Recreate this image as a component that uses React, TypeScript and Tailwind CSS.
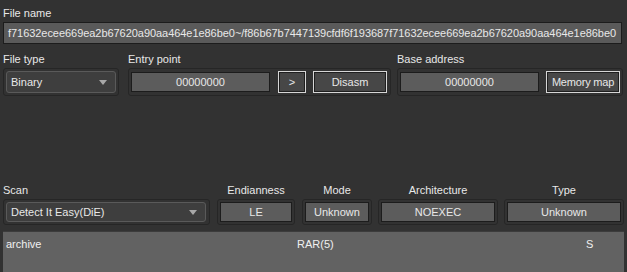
const FILE_NAME =
  'f71632ecee669ea2b67620a90aa464e1e86be0~/f86b67b7447139cfdf6f193687f71632ecee669ea2b67620a90aa464e1e86be0'

function Arrow() {
  return (
    <svg width="8" height="5" viewBox="0 0 8 5" className="shrink-0">
      <path d="M0 0 H8 L4 5 Z" fill="#a8a8a8" />
    </svg>
  )
}

function Combo({ value, className }: { value: string; className: string }) {
  return (
    <div
      className={`flex items-center justify-between pl-[4px] pr-[8px] rounded-[3px] border border-[#5a5a5a] bg-[#3e3e3e] ${className}`}
    >
      <span>{value}</span>
      <Arrow />
    </div>
  )
}

function Field({ value, className }: { value: string; className: string }) {
  return (
    <div
      className={`flex items-center justify-center h-[20px] border border-[#1c1c1c] bg-[#5c5c5c] ${className}`}
    >
      {value}
    </div>
  )
}

function Btn({ label, className }: { label: string; className: string }) {
  return (
    <div
      className={`flex items-center justify-center h-[22px] border border-[#d6d6d6] bg-[#474747] shadow-[inset_0_0_0_1px_#1e1e1e] whitespace-nowrap ${className}`}
    >
      {label}
    </div>
  )
}

function Frame({ children, className }: { children: React.ReactNode; className: string }) {
  return (
    <div
      className={`flex items-center rounded-[3px] border border-[#262626] px-[2px] ${className}`}
    >
      {children}
    </div>
  )
}

export default function App() {
  return (
    <div className="w-[627px] h-[272px] overflow-hidden bg-[#323232] text-[#e8e8e8] text-[11px] leading-[13px] font-['Liberation_Sans',Arial,sans-serif]">
      <div className="pl-[3px] pr-[5px] pt-[7px]">
        <div className="h-[13px]">File name</div>
        <div className="mt-[2px] h-[22px] flex items-center pl-[4px] border border-[#1c1c1c] bg-[#5a5a5a] whitespace-nowrap overflow-hidden tracking-[-0.05px]">
          {FILE_NAME}
        </div>
      </div>

      <div className="flex pl-[3px] mt-[9px] gap-[9px]">
        <div className="flex flex-col w-[116px]">
          <div className="h-[13px]">File type</div>
          <Frame className="mt-[2px] h-[28px]">
            <Combo value="Binary" className="w-[111px] h-[22px]" />
          </Frame>
        </div>
        <div className="flex flex-col w-[263px]">
          <div className="h-[13px]">Entry point</div>
          <Frame className="mt-[2px] h-[28px]">
            <Field value="00000000" className="w-[139px]" />
            <Btn label=">" className="ml-[8px] w-[28px]" />
            <Btn label="Disasm" className="ml-[7px] w-[74px]" />
          </Frame>
        </div>
        <div className="flex flex-col w-[226px] -ml-[3px]">
          <div className="h-[13px]">Base address</div>
          <Frame className="mt-[2px] h-[28px]">
            <Field value="00000000" className="w-[139px]" />
            <Btn label="Memory map" className="ml-[7px] w-[74px] tracking-[-0.2px]" />
          </Frame>
        </div>
      </div>

      <div className="flex pl-[3px] mt-[88px]">
        <div className="flex flex-col w-[207px]">
          <div className="h-[13px]">Scan</div>
          <Frame className="mt-[2px] h-[26px]">
            <Combo value="Detect It Easy(DiE)" className="w-[200px] h-[20px]" />
          </Frame>
        </div>
        <div className="flex flex-col items-center w-[78px] ml-[7px]">
          <div className="h-[13px]">Endianness</div>
          <Frame className="mt-[2px] h-[26px] w-full">
            <Field value="LE" className="w-[72px]" />
          </Frame>
        </div>
        <div className="flex flex-col items-center w-[70px] ml-[7px]">
          <div className="h-[13px]">Mode</div>
          <Frame className="mt-[2px] h-[26px] w-full">
            <Field value="Unknown" className="w-[64px]" />
          </Frame>
        </div>
        <div className="flex flex-col items-center w-[120px] ml-[6px]">
          <div className="h-[13px]">Architecture</div>
          <Frame className="mt-[2px] h-[26px] w-full">
            <Field value="NOEXEC" className="w-[114px]" />
          </Frame>
        </div>
        <div className="flex flex-col items-center w-[120px] ml-[6px]">
          <div className="h-[13px]">Type</div>
          <Frame className="mt-[2px] h-[26px] w-full">
            <Field value="Unknown" className="w-[114px]" />
          </Frame>
        </div>
      </div>

      <div className="mt-[6px] ml-[3px] w-[621px] h-[41px] bg-[#626262] border-t border-[#3c3c3c]">
        <div className="flex h-[24px] items-center text-[#f0f0f0]">
          <span className="pl-[3px] w-[294px]">archive</span>
          <span className="w-[289px]">RAR(5)</span>
          <span>S</span>
        </div>
      </div>
    </div>
  )
}
